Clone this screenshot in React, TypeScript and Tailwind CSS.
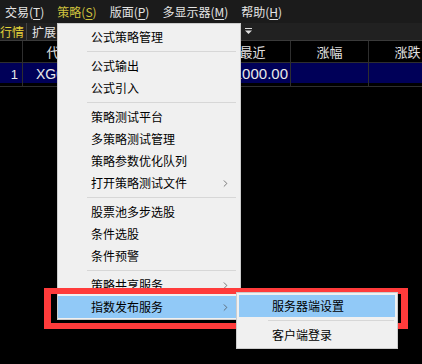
import { ChevronRight } from "lucide-react";

type Entry = { label?: string; arrow?: boolean; active?: boolean; sep?: boolean };

const menuItems: Entry[] = [
  { label: "公式策略管理" },
  { sep: true },
  { label: "公式输出" },
  { label: "公式引入" },
  { sep: true },
  { label: "策略测试平台" },
  { label: "多策略测试管理" },
  { label: "策略参数优化队列" },
  { label: "打开策略测试文件", arrow: true },
  { sep: true },
  { label: "股票池多步选股" },
  { label: "条件选股" },
  { label: "条件预警" },
  { sep: true },
  { label: "策略共享服务", arrow: true },
  { label: "指数发布服务", arrow: true, active: true },
];

const subItems: Entry[] = [
  { label: "服务器端设置", active: true },
  { sep: true },
  { label: "客户端登录" },
];

const topMenu = [
  { name: "交易", key: "T" },
  { name: "策略", key: "S", on: true },
  { name: "版面", key: "P" },
  { name: "多显示器", key: "M" },
  { name: "帮助", key: "H" },
];

const cols = "grid grid-cols-[23px_74px_118px_76px_78px_78px_1fr]";

const MenuList = ({ items }: { items: Entry[] }) => (
  <>
    {items.map((it, i) =>
      it.sep ? (
        <div key={i} className="h-[7px] flex items-center pl-[29px] pr-[1px]">
          <div className="h-px w-full bg-[#d7d7d7]" />
        </div>
      ) : (
        <div
          key={i}
          className={`h-[22px] flex items-center justify-between pl-[33px] pr-[6px] ${
            it.active ? "bg-[#91c9f7]" : ""
          }`}
        >
          <span>{it.label}</span>
          {it.arrow && <ChevronRight size={11} strokeWidth={1.5} className="text-[#444]" />}
        </div>
      )
    )}
  </>
);

export default function App() {
  return (
    <div
      className="relative w-[422px] h-[364px] overflow-hidden bg-black text-[12px]"
      style={{ fontFamily: '"Noto Sans CJK SC", "Noto Sans", sans-serif' }}
    >
      {/* menu bar */}
      <div className="h-[23px] bg-[#1b1b1b] flex items-center pl-[5px] gap-[13px] text-[#e4e4e4]">
        {topMenu.map((m) => (
          <span key={m.key} className={m.on ? "text-[#cfc23e]" : ""}>
            {m.name}(<span className="underline underline-offset-2">{m.key}</span>)
          </span>
        ))}
      </div>

      {/* toolbar */}
      <div className="h-[18px] bg-[#212121] border-b border-[#3a3a3a] flex items-stretch">
        <div className="w-[27px] border-r border-[#444] flex items-center text-[#e6d43a]">行情</div>
        <div className="w-[40px] border-r border-[#444] flex items-center pl-[5px] text-[#e4e4e4]">扩展</div>
        <div className="flex-1" />
        <div className="w-[180px] flex items-center pl-[3px]">
          <svg width="8" height="7" viewBox="0 0 8 7">
            <rect x="0" y="0" width="7" height="1" fill="#ddd" />
            <path d="M0 2.5h7L3.5 6z" fill="#ddd" />
          </svg>
        </div>
      </div>

      {/* table */}
      <div className={`${cols} h-[22px] text-[#e0e0e0] text-[13px]`}>
        <div className="border-r border-b border-[#2e2e2e]" />
        <div className="border-r border-b border-[#2e2e2e] flex items-center justify-center">代码</div>
        <div className="border-r border-b border-[#2e2e2e]" />
        <div className="border-r border-b border-[#2e2e2e] flex items-center justify-center">最近</div>
        <div className="border-r border-b border-[#2e2e2e] flex items-center justify-center">涨幅</div>
        <div className="border-r border-b border-[#2e2e2e] flex items-center justify-center">涨跌</div>
        <div className="border-b border-[#2e2e2e]" />
      </div>
      <div
        className={`${cols} h-[20px] bg-[#000058] text-[#e8e8e8] text-[14px]`}
        style={{ fontFamily: '"Liberation Sans", Arial, sans-serif' }}
      >
        <div className="border-r border-b border-[#2e2e2e] flex items-center justify-end pr-[4px] text-[13px]">1</div>
        <div className="border-r border-b border-[#2e2e2e] flex items-center pl-[13px]">XG0001</div>
        <div className="border-r border-b border-[#2e2e2e]" />
        <div className="border-r border-b border-[#2e2e2e] flex items-center justify-end pr-[2px] text-[15px]">1000.00</div>
        <div className="border-r border-b border-[#2e2e2e]" />
        <div className="border-r border-b border-[#2e2e2e]" />
        <div className="border-b border-[#2e2e2e]" />
      </div>

      {/* dropdown */}
      <div className="absolute left-[57px] top-[23px] w-[184px] bg-[#f0f0f0] border border-[#cccccc] pt-[2px] pb-[1px] pr-[3px] text-black z-10">
        <MenuList items={menuItems} />
      </div>

      {/* highlight frame */}
      <div className="absolute left-[44px] top-[288px] w-[364px] h-[41px] border-x-[7px] border-y-[6px] border-[#ff3b3b] z-20" />

      {/* submenu */}
      <div className="absolute left-[236px] top-[292px] w-[162px] bg-[#f0f0f0] border border-[#cccccc] py-[2px] px-[2px] text-black z-30">
        <MenuList items={subItems} />
      </div>
    </div>
  );
}
